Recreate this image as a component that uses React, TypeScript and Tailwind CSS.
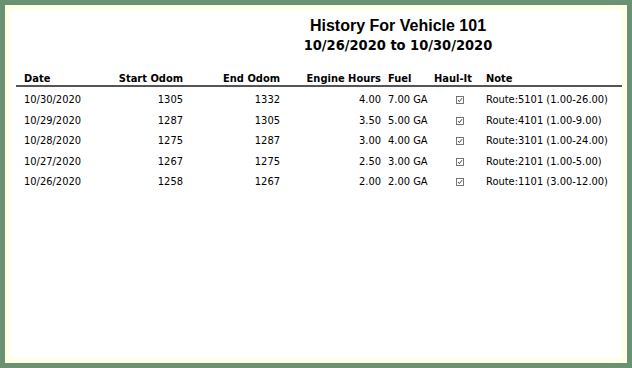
const rows = [
  { date: '10/30/2020', start: '1305', end: '1332', hours: '4.00', fuel: '7.00 GA', note: 'Route:5101 (1.00-26.00)' },
  { date: '10/29/2020', start: '1287', end: '1305', hours: '3.50', fuel: '5.00 GA', note: 'Route:4101 (1.00-9.00)' },
  { date: '10/28/2020', start: '1275', end: '1287', hours: '3.00', fuel: '4.00 GA', note: 'Route:3101 (1.00-24.00)' },
  { date: '10/27/2020', start: '1267', end: '1275', hours: '2.50', fuel: '3.00 GA', note: 'Route:2101 (1.00-5.00)' },
  { date: '10/26/2020', start: '1258', end: '1267', hours: '2.00', fuel: '2.00 GA', note: 'Route:1101 (3.00-12.00)' },
];

const cols = 'grid grid-cols-[84px_83px_97px_101px_49px_56px_1fr]';

const Check = () => (
  <svg width="8" height="8" viewBox="0 0 8 8" className="inline-block">
    <rect x="0.5" y="0.5" width="7" height="7" fill="white" stroke="#666" strokeWidth="0.9" />
    <path d="M2 4 L3.4 5.6 L6 2.2" fill="none" stroke="#333" strokeWidth="0.9" />
  </svg>
);

export default function App() {
  return (
    <div className="w-[632px] h-[368px] bg-[#6b9174] p-[5px]">
      <div className="w-full h-full bg-[#ffffe6] p-[5px]">
        <div className="w-full h-full bg-white text-black font-['Tahoma','DejaVu_Sans_Condensed','Liberation_Sans',sans-serif]">
          <div className="pl-[164px] pt-[7px] text-center">
            <div className="font-['Liberation_Sans',Arial,sans-serif] font-bold text-[16px] leading-[18px]">
              History For Vehicle 101
            </div>
            <div className="font-bold text-[14.5px] leading-[18px] mt-[1px]">10/26/2020 to 10/30/2020</div>
          </div>

          <div className="ml-[6px] mt-[18px]">
            <div className={`${cols} font-bold text-[11px] leading-[13px] border-b-2 border-[#555]`}>
              <div className="pl-[8px]">Date</div>
              <div className="text-right">Start Odom</div>
              <div className="text-right">End Odom</div>
              <div className="text-right">Engine Hours</div>
              <div className="pl-[7px]">Fuel</div>
              <div className="pl-[4px]">Haul-It</div>
              <div>Note</div>
            </div>
            <div className="pt-[3px]">
              {rows.map((r) => (
                <div key={r.date} className={`${cols} text-[11px] leading-[20.5px] items-center`}>
                  <div className="pl-[8px]">{r.date}</div>
                  <div className="text-right">{r.start}</div>
                  <div className="text-right">{r.end}</div>
                  <div className="text-right">{r.hours}</div>
                  <div className="pl-[7px]">{r.fuel}</div>
                  <div className="pl-[26px] flex items-center">
                    <Check />
                  </div>
                  <div>{r.note}</div>
                </div>
              ))}
            </div>
          </div>
        </div>
      </div>
    </div>
  );
}
